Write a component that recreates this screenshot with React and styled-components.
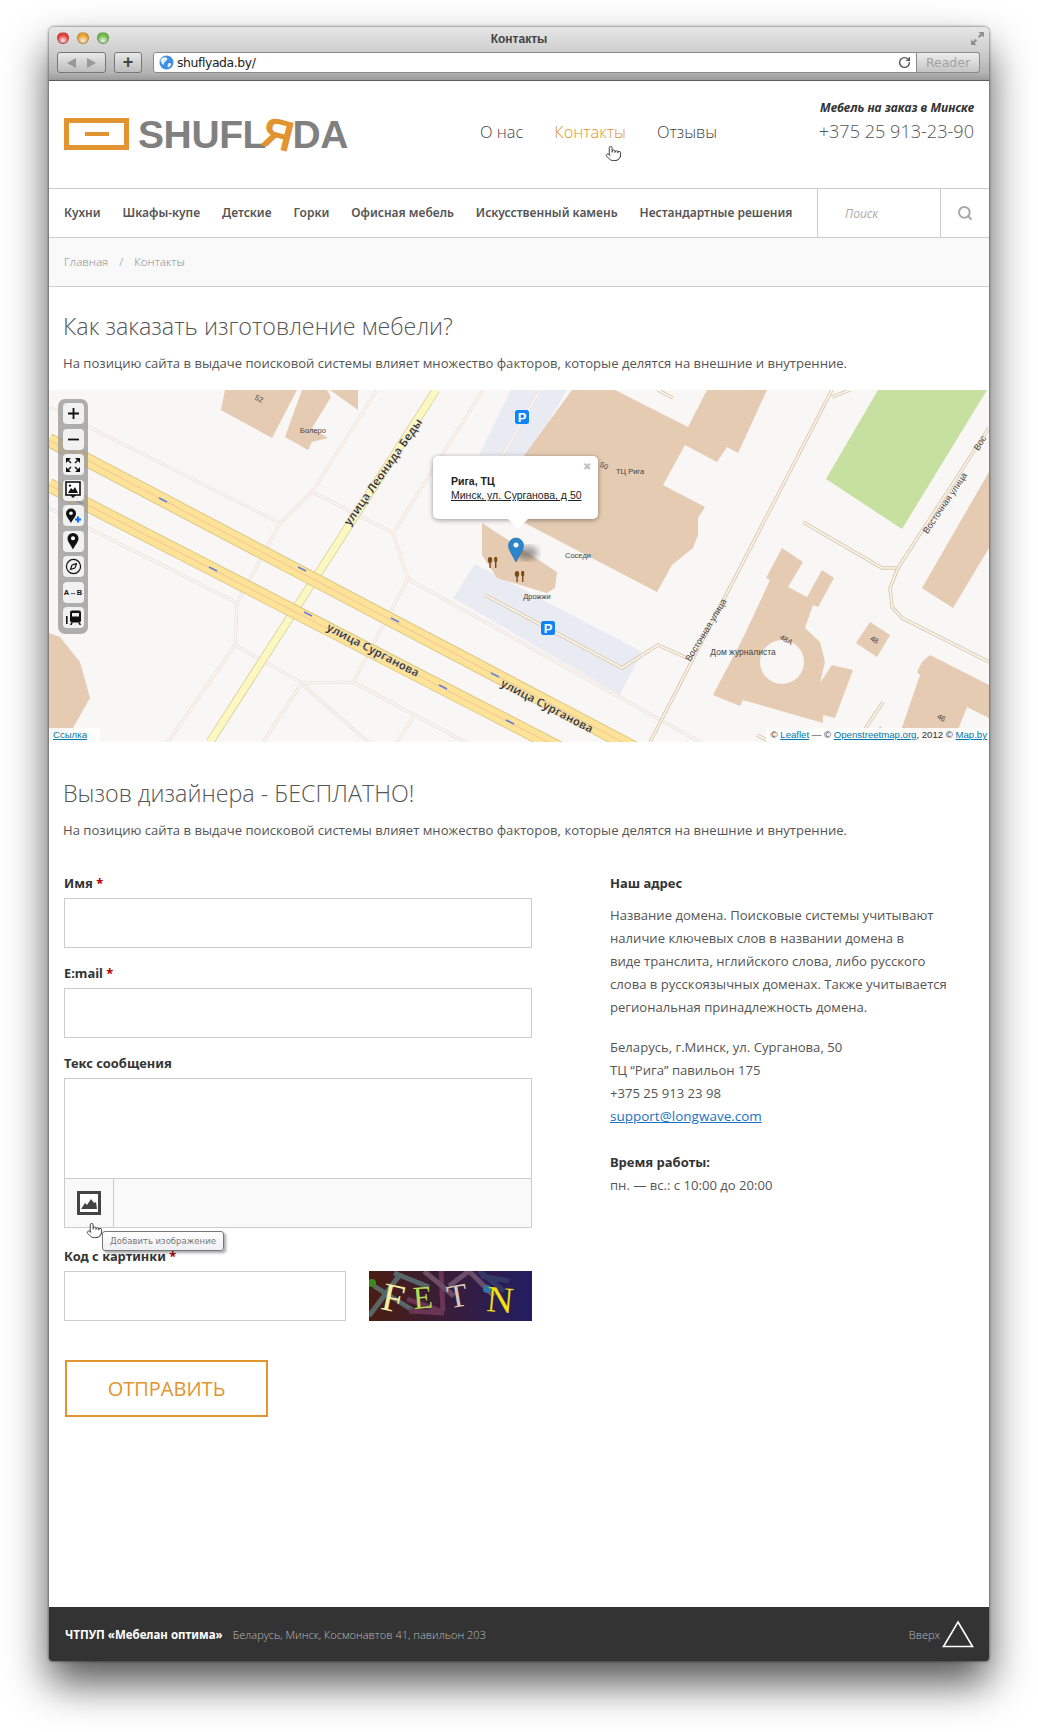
import styled, { createGlobalStyle } from 'styled-components';
import { Search, Pointer, RotateCw, Compass } from 'lucide-react';

const GlobalStyle = createGlobalStyle`
  html, body { margin: 0; padding: 0; background: #fff; }
  body { width: 1038px; height: 1732px; overflow: hidden; font-family: "Open Sans", "Noto Sans", sans-serif; }
  * { box-sizing: border-box; }
`;

const buildings = [
  '176,0 248,0 223,48 172,20',
  '253,0 278,0 282,7 263,38 279,48 263,52 259,60 236,47',
  '281,0 309,0 309,20',
  '0,243 11,247 31,272 41,308 24,338 0,352',
  '523,0 566,0 639,37 658,0 718,0 689,63 678,57 668,72 636,55 614,95 656,117 649,128 649,145 644,158 623,175 608,202 470,130 450,100',
  '433,133 508,182 506,198 498,203 481,198 448,188 433,165',
  '733,158 754,172 739,197 758,207 773,180 785,188 769,217 764,215 756,238 771,252 776,272 771,293 783,275 804,280 786,328 774,325 774,333 694,310 691,316 664,305 694,248 721,190 717,188',
  '821,232 841,245 828,267 807,253',
  '881,265 940,295 940,328 918,317 904,352 848,352 871,285 868,282 873,272',
  '940,82 873,198 904,218 940,158',
  '831,336 848,352 822,352',
];

const minorRoads = [
  '0,17 231,133 263,102 328,0',
  '263,102 344,143 434,0',
  '231,133 188,213 186,255 119,352',
  '0,118 188,213',
  '344,143 359,189 304,292 253,293 186,255',
  '359,189 651,352',
  '253,293 214,352',
  '254,295 319,352',
  '304,292 416,352',
  '364,327 348,352',
  '491,0 454,65',
];

const serviceRoads = [
  '783,0 601,352',
  '783,7 801,0',
  '940,38 849,178 833,178 754,132',
  '849,178 841,198 843,217 853,228 940,272',
  '436,205 573,278 609,255 638,268',
  '834,312 814,342',
  '609,0 624,8',
  '708,345 721,352',
];

const trafficArrows = [
  [114, 110], [253, 179], [346, 230], [446, 285],
  [164, 179], [259, 224], [394, 297], [461, 332], [30, 112],
];

const smallLabels = [
  { x: 264, y: 43, t: 'Болеро' },
  { x: 209, y: 11, t: '52', r: 25 },
  { x: 581, y: 84, t: 'ТЦ Рига' },
  { x: 554, y: 78, t: '50', r: 25 },
  { x: 529, y: 168, t: 'Соседи' },
  { x: 488, y: 209, t: 'Дрожжи' },
  { x: 694, y: 265, t: 'Дом журналиста', s: 8.5 },
  { x: 736, y: 252, t: '48А', r: 30 },
  { x: 824, y: 252, t: '48', r: 30 },
  { x: 891, y: 330, t: '46', r: 30 },
];

const MapDrawing = () => (
  <MapSvg viewBox="0 0 940 352">
    <defs>
      <filter id="pinBlur"><feGaussianBlur stdDeviation="3" /></filter>
    </defs>
    <rect width="940" height="352" fill="#f9f6f6" />
    <polygon points="462,0 518,0 480,65 430,65" fill="#e9ebf3" />
    <polygon points="426,174 593,262 571,305 404,208" fill="#e9ebf3" />
    <polygon points="829,0 938,0 853,139 777,89" fill="#c6e0a0" />
    {buildings.map((p) => <polygon key={p} points={p} fill="#e5cbb2" />)}
    <circle cx="733" cy="272" r="22" fill="#f9f6f6" />
    {minorRoads.map((p) => (
      <g key={p} fill="none">
        <polyline points={p} stroke="#ece2d6" strokeWidth="3.2" />
        <polyline points={p} stroke="#f9f6f6" strokeWidth="1.6" />
      </g>
    ))}
    {serviceRoads.map((p) => (
      <g key={p} fill="none">
        <polyline points={p} stroke="#dcc7a2" strokeWidth="3.4" />
        <polyline points={p} stroke="#f9f6f6" strokeWidth="1.6" />
      </g>
    ))}
    <line x1="387" y1="0" x2="161" y2="352" stroke="#d8c98e" strokeWidth="8.4" />
    <line x1="387" y1="0" x2="161" y2="352" stroke="#fdf8c2" strokeWidth="7" />
    <g fill="none">
      <line x1="0" y1="50" x2="640" y2="387" stroke="#d9c07c" strokeWidth="14" />
      <line x1="0" y1="50" x2="640" y2="387" stroke="#fde397" strokeWidth="12.4" />
      <line x1="0" y1="50" x2="640" y2="387" stroke="#f4b99a" strokeWidth="0.8" />
      <line x1="0" y1="95" x2="640" y2="425" stroke="#d9c07c" strokeWidth="14" />
      <line x1="0" y1="95" x2="640" y2="425" stroke="#fde397" strokeWidth="12.4" />
      <line x1="0" y1="95" x2="640" y2="425" stroke="#f4b99a" strokeWidth="0.8" />
    </g>
    {trafficArrows.map(([x, y]) => (
      <line key={x} x1={x - 4} y1={y - 2} x2={x + 4} y2={y + 2} stroke="#6a7fd8" strokeWidth="1.6" />
    ))}
    <RoadName x="324" y="264" transform="rotate(27.5 324 260)">улица Сурганова</RoadName>
    <RoadName x="498" y="320" transform="rotate(27.5 498 316)">улица Сурганова</RoadName>
    <RoadName x="334" y="86" transform="rotate(-55 334 82)">улица Леонида Беды</RoadName>
    <StreetName x="657" y="243" transform="rotate(-59 657 240)">Восточная улица</StreetName>
    <StreetName x="896" y="116" transform="rotate(-56 896 113)">Восточная улица</StreetName>
    <StreetName x="931" y="56" transform="rotate(-58 931 53)">Вос</StreetName>
    {smallLabels.map((l) => (
      <PlaceName key={l.t} x={l.x} y={l.y} fontSize={l.s || 7.5} transform={l.r ? `rotate(${l.r} ${l.x} ${l.y})` : undefined}>
        {l.t}
      </PlaceName>
    ))}
    {[[473, 27], [499, 238]].map(([x, y]) => (
      <g key={x}>
        <rect x={x - 7} y={y - 7} width="14" height="14" rx="2.5" fill="#0f84f5" />
        <ParkingLetter x={x} y={y + 4.6}>P</ParkingLetter>
      </g>
    ))}
    {[[444, 172], [471, 186]].map(([x, y]) => (
      <g key={x} fill="#7a4a17">
        <ellipse cx={x - 3} cy={y - 2} rx="2.2" ry="3" />
        <rect x={x - 3.6} y={y - 1} width="1.4" height="7" />
        <rect x={x + 1.2} y={y - 5} width="3" height="5" rx="1" />
        <rect x={x + 2} y={y - 1} width="1.4" height="7" />
      </g>
    ))}
    <ellipse cx="478" cy="163" rx="11" ry="7" fill="#333" opacity="0.45" filter="url(#pinBlur)" />
    <path d="M467 172 C463 164 459.5 160 459.5 155.5 A7.5 7.5 0 0 1 474.5 155.5 C474.5 160 471 164 467 172 Z" fill="#2b84cc" stroke="#1f6ba8" strokeWidth="0.6" />
    <circle cx="467" cy="155" r="2.5" fill="#fff" />
  </MapSvg>
);

const MapControls = () => (
  <ControlPanel>
    <ControlButton><svg width="15" height="15" viewBox="0 0 15 15"><path d="M7.5 2v11M2 7.5h11" stroke="#111" strokeWidth="1.8" /></svg></ControlButton>
    <ControlButton><svg width="15" height="15" viewBox="0 0 15 15"><path d="M2 7.5h11" stroke="#111" strokeWidth="1.8" /></svg></ControlButton>
    <ControlButton><svg width="16" height="16" viewBox="0 0 16 16" fill="#111"><path d="M1 1h5L1 6zM15 1v5l-5-5zM1 15v-5l5 5zM15 15h-5l5-5z" /><path d="M3 3l3 3M13 3l-3 3M3 13l3-3M13 13l-3-3" stroke="#111" strokeWidth="1.4" /></svg></ControlButton>
    <ControlButton><svg width="16" height="18" viewBox="0 0 16 18"><rect x="1" y="1" width="14" height="13" fill="#fff" stroke="#111" strokeWidth="1.6" /><path d="M3 12l3-5 2 2 2-3 3 6z" fill="#111" /><circle cx="5" cy="4.6" r="1.2" fill="#111" /><path d="M5 14h6l-3 3z" fill="#111" /></svg></ControlButton>
    <ControlButton><svg width="18" height="18" viewBox="0 0 18 18"><path d="M7 16C5 12 2 9.5 2 6.5a5 5 0 0 1 10 0C12 9.5 9 12 7 16z" fill="#111" /><circle cx="7" cy="6.3" r="1.8" fill="#fff" /><path d="M14 9.5v6M11 12.5h6" stroke="#0f6cf5" strokeWidth="2.2" /></svg></ControlButton>
    <ControlButton><svg width="16" height="18" viewBox="0 0 16 18"><path d="M8 17.5C6 13 2.5 10 2.5 6.5a5.5 5.5 0 0 1 11 0C13.5 10 10 13 8 17.5z" fill="#111" /><circle cx="8" cy="6.3" r="2" fill="#fff" /></svg></ControlButton>
    <ControlButton><Compass size={17} color="#111" strokeWidth={1.7} /></ControlButton>
    <ControlButton><RouteText>A↔B</RouteText></ControlButton>
    <ControlButton><svg width="17" height="15" viewBox="0 0 17 15" fill="#111"><rect x="5" y="0.5" width="11" height="12" rx="2" /><rect x="7" y="3" width="7" height="3.5" fill="#f0f0f0" /><rect x="1" y="6" width="1.6" height="8" /><path d="M6 12.5h2L6.5 15H5zM13 12.5h2l1 2.5h-1.5z" /></svg></ControlButton>
  </ControlPanel>
);

function App() {
  return (
    <>
      <GlobalStyle />
      <BrowserWindow>
        <Chrome>
          <TitleRow>
            <Lights>
              <Light $c="#e8403c" />
              <Light $c="#e8a02c" />
              <Light $c="#6cbc48" />
            </Lights>
            <WindowTitle>Контакты</WindowTitle>
            <ExpandIcon viewBox="0 0 14 14">
              <path d="M8 1h5v5l-1.8-1.8L8.8 6.6 7.4 5.2l2.4-2.4zM6 13H1V8l1.8 1.8 2.4-2.4 1.4 1.4-2.4 2.4z" fill="#8d8d8d" />
            </ExpandIcon>
          </TitleRow>
          <ToolRow>
            <BackForward>
              <Arrow $left />
              <Arrow />
            </BackForward>
            <PlusButton>+</PlusButton>
            <AddressBar>
              <svg width="15" height="15" viewBox="0 0 15 15">
                <circle cx="7.5" cy="7.5" r="7" fill="#3f8fe0" />
                <path d="M3 3c2-1 4-1 5 0s0 2-1 3-2 1-2 3-2 0-3-2 0-3 1-4zM10 8c2 0 3 1 2 2s-2 3-3 2 0-4 1-4z" fill="#e5f0fa" />
              </svg>
              <Url>shuflyada.by/</Url>
              <Reload><RotateCw size={13} strokeWidth={2.6} color="#555" /></Reload>
              <ReaderButton>Reader</ReaderButton>
            </AddressBar>
          </ToolRow>
        </Chrome>

        <Header>
          <Logo>
            <LogoBox><LogoDash /></LogoBox>
            <LogoText>SHUFL<LogoYa>Я</LogoYa>DA</LogoText>
          </Logo>
          <TopNav>
            <TopLink>О нас</TopLink>
            <TopLink $active>
              Контакты
              <HandCursor $left={51} $top={26}><Pointer size={17} strokeWidth={1.3} color="#333" fill="#fff" /></HandCursor>
            </TopLink>
            <TopLink>Отзывы</TopLink>
          </TopNav>
          <Contact>
            <Slogan>Мебель на заказ в Минске</Slogan>
            <Phone>+375 25 913-23-90</Phone>
          </Contact>
        </Header>

        <MainNav>
          <NavList>
            {['Кухни', 'Шкафы-купе', 'Детские', 'Горки', 'Офисная мебель', 'Искусственный камень', 'Нестандартные решения'].map((item) => (
              <NavItem key={item}>{item}</NavItem>
            ))}
          </NavList>
          <SearchField>Поиск</SearchField>
          <SearchButton><Search size={16} strokeWidth={3} color="#aaa" /></SearchButton>
        </MainNav>

        <Crumbs>
          <span>Главная</span>
          <CrumbSep>/</CrumbSep>
          <span>Контакты</span>
        </Crumbs>

        <Intro>
          <Title>Как заказать изготовление мебели?</Title>
          <Lead>На позицию сайта в выдаче поисковой системы влияет множество факторов, которые делятся на внешние и внутренние.</Lead>
        </Intro>

        <MapBox>
          <MapDrawing />
          <MapControls />
          <Popup>
            <PopupClose>✖</PopupClose>
            <PopupName>Рига, ТЦ</PopupName>
            <PopupAddress>Минск, ул. Сурганова, д 50</PopupAddress>
            <PopupTail />
          </Popup>
          <MapLinkBox>Ссылка</MapLinkBox>
          <Attribution>© <MapLink>Leaflet</MapLink> — © <MapLink>Openstreetmap.org</MapLink>, 2012 © <MapLink>Map.by</MapLink></Attribution>
        </MapBox>

        <Content>
          <Title>Вызов дизайнера - БЕСПЛАТНО!</Title>
          <Lead>На позицию сайта в выдаче поисковой системы влияет множество факторов, которые делятся на внешние и внутренние.</Lead>
          <Columns>
            <Form>
              <Field>
                <Label>Имя <Req>*</Req></Label>
                <Input />
              </Field>
              <Field>
                <Label>E:mail <Req>*</Req></Label>
                <Input />
              </Field>
              <Field $gap={18}>
                <Label>Текс сообщения</Label>
                <Editor>
                  <EditorArea />
                  <EditorBar>
                    <EditorButton>
                      <svg width="24" height="24" viewBox="0 0 24 24">
                        <rect width="24" height="24" fill="#444" />
                        <rect x="3" y="3" width="18" height="18" fill="#fff" />
                        <path d="M4 18l4-6 2 2 4-6 3 4 2-1 1 7z" fill="#444" />
                      </svg>
                    </EditorButton>
                    <HandCursor $left={21} $top={43}><Pointer size={17} strokeWidth={1.3} color="#333" fill="#fff" /></HandCursor>
                    <Tooltip>Добавить изображение</Tooltip>
                  </EditorBar>
                </Editor>
              </Field>
              <Field $gap={39}>
                <Label>Код с картинки <Req>*</Req></Label>
                <CaptchaRow>
                  <CaptchaInput />
                  <Captcha viewBox="0 0 163 50">
                    <defs>
                      <linearGradient id="capBg" x1="0" x2="1" y1="0" y2="0">
                        <stop offset="0" stopColor="#4a1d12" />
                        <stop offset="1" stopColor="#231d63" />
                      </linearGradient>
                    </defs>
                    <rect width="163" height="50" fill="url(#capBg)" />
                    <g fill="none" strokeWidth="5" opacity="0.75">
                      <path d="M0 45L30 5M5 15L45 40M25 2L60 16" stroke="#5f7f80" />
                      <path d="M38 28L72 40M40 40L75 42M72 0L74 40" stroke="#7a3c60" />
                      <path d="M55 0L85 25M80 15L100 0M100 0L125 25" stroke="#7d5d75" />
                      <path d="M110 0L135 20M112 5L140 10" stroke="#35406f" />
                    </g>
                    <circle cx="3" cy="12" r="4" fill="#3f8a20" />
                    <circle cx="118" cy="18" r="4" fill="#2b78a8" />
                    <CaptchaLetter x="13" y="41" fontSize="40" fill="#f6eda0" transform="rotate(12 27 28)">F</CaptchaLetter>
                    <CaptchaLetter x="44" y="37" fontSize="32" fill="#b5dc56" transform="rotate(-5 55 27)">E</CaptchaLetter>
                    <CaptchaLetter x="78" y="36" fontSize="33" fill="#d8c8b8" transform="rotate(-10 88 24)">T</CaptchaLetter>
                    <CaptchaLetter x="118" y="41" fontSize="37" fill="#f2e010" transform="rotate(5 130 26)">N</CaptchaLetter>
                  </Captcha>
                </CaptchaRow>
              </Field>
              <SubmitButton>ОТПРАВИТЬ</SubmitButton>
            </Form>
            <Aside>
              <AsideTitle>Наш адрес</AsideTitle>
              <AsideText>
                Название домена. Поисковые системы учитывают<br />
                наличие ключевых слов в названии домена в<br />
                виде транслита, нглийского слова, либо русского<br />
                слова в русскоязычных доменах. Также учитывается<br />
                региональная принадлежность домена.
              </AsideText>
              <AsideText $top={17}>
                Беларусь, г.Минск, ул. Сурганова, 50<br />
                ТЦ “Рига” павильон 175<br />
                +375 25 913 23 98<br />
                <Mail>support@longwave.com</Mail>
              </AsideText>
              <AsideTitle $top={24}>Время работы:</AsideTitle>
              <AsideText $top={2}>пн. — вс.: с 10:00 до 20:00</AsideText>
            </Aside>
          </Columns>
        </Content>

        <Footer>
          <FooterCompany>ЧТПУП «Мебелан оптима»</FooterCompany>
          <FooterAddress>Беларусь, Минск, Космонавтов 41, павильон 203</FooterAddress>
          <ToTop>
            Вверх
            <svg width="32" height="28" viewBox="0 0 32 28">
              <path d="M16 2L30.5 26.5H1.5z" fill="none" stroke="#fff" strokeWidth="1.6" />
            </svg>
          </ToTop>
        </Footer>
      </BrowserWindow>
    </>
  );
}

const BrowserWindow = styled.div`
  margin: 27px 0 0 49px;
  width: 940px;
  height: 1634px;
  display: flex;
  flex-direction: column;
  background: #fff;
  border-radius: 5px 5px 3px 3px;
  box-shadow: 0 22px 42px rgba(0, 0, 0, 0.68), 0 0 3px rgba(0, 0, 0, 0.7);
  overflow: hidden;
`;

const Chrome = styled.div`
  height: 54px;
  flex: none;
  background: linear-gradient(#e6e6e6, #cfcfcf 45%, #b4b4b4 86%, #9a9a9a 100%);
  border-bottom: 1px solid #5c5c5c;
`;

const TitleRow = styled.div`
  position: relative;
  height: 24px;
  padding-bottom: 1px;
  margin-bottom: 1px;
  display: flex;
  align-items: center;
  justify-content: center;
`;

const Lights = styled.div`
  position: absolute;
  left: 8px;
  top: 5px;
  display: flex;
  gap: 8px;
`;

const Light = styled.span`
  width: 12px;
  height: 12px;
  border-radius: 50%;
  background: radial-gradient(circle at 50% 75%, #fff8 0, ${(p) => p.$c} 60%);
  border: 1px solid #0003;
`;

const WindowTitle = styled.div`
  font: bold 12px "Liberation Sans", sans-serif;
  color: #444;
`;

const ExpandIcon = styled.svg`
  position: absolute;
  right: 4px;
  top: 4px;
  width: 15px;
  height: 15px;
`;

const ToolRow = styled.div`
  display: flex;
  align-items: center;
  padding-left: 8px;
  height: 21px;
`;

const BackForward = styled.div`
  width: 49px;
  height: 21px;
  display: flex;
  align-items: center;
  justify-content: space-around;
  padding: 0 4px;
  border: 1px solid #777;
  border-radius: 3px;
  background: linear-gradient(#e8e8e8, #bdbdbd);
`;

const Arrow = styled.span`
  width: 0;
  height: 0;
  border-top: 5px solid transparent;
  border-bottom: 5px solid transparent;
  ${(p) => (p.$left ? 'border-right: 9px solid #999;' : 'border-left: 9px solid #999;')}
`;

const PlusButton = styled.div`
  margin-left: 8px;
  width: 28px;
  height: 21px;
  display: flex;
  align-items: center;
  justify-content: center;
  font: bold 18px "Liberation Sans", sans-serif;
  color: #444;
  border: 1px solid #777;
  border-radius: 3px;
  background: linear-gradient(#e8e8e8, #bdbdbd);
`;

const AddressBar = styled.div`
  margin-left: 11px;
  width: 827px;
  height: 21px;
  display: flex;
  align-items: center;
  padding-left: 5px;
  background: #fff;
  border: 1px solid #8a8a8a;
  border-radius: 3px;
`;

const Url = styled.span`
  margin-left: 3px;
  font: 12.4px "DejaVu Sans", sans-serif;
  letter-spacing: -0.4px;
  color: #222;
`;

const Reload = styled.span`
  margin-left: auto;
  margin-right: 5px;
  display: flex;
`;

const ReaderButton = styled.div`
  width: 64px;
  height: 21px;
  margin-right: -1px;
  display: flex;
  align-items: center;
  justify-content: center;
  font: 12.5px "DejaVu Sans", sans-serif;
  color: #a2a2a2;
  border: 1px solid #8a8a8a;
  border-radius: 0 3px 3px 0;
  background: linear-gradient(#ededed, #c5c5c5);
`;

const Header = styled.header`
  position: relative;
  height: 107px;
  flex: none;
  display: flex;
  align-items: flex-start;
  padding-left: 15px;
`;

const Logo = styled.div`
  display: flex;
  align-items: center;
  margin-top: 36px;
`;

const LogoBox = styled.div`
  width: 65px;
  height: 32px;
  display: flex;
  align-items: center;
  justify-content: center;
  border: 5px solid #e29430;
`;

const LogoDash = styled.span`
  width: 24px;
  height: 4px;
  background: #e29430;
`;

const LogoText = styled.div`
  margin-left: 9px;
  font: bold 39px/32px "Liberation Sans", sans-serif;
  letter-spacing: -0.4px;
  color: #808080;
`;

const LogoYa = styled.span`
  display: inline-block;
  margin: 0 -1px 0 -3px;
  font-size: 1.1em;
  color: #e29430;
  transform: rotate(14deg) translateY(1px);
`;

const TopNav = styled.nav`
  position: absolute;
  left: 431px;
  top: 38px;
  display: flex;
  gap: 31px;
`;

const TopLink = styled.a`
  position: relative;
  font-size: 16.4px;
  font-weight: 300;
  line-height: 26px;
  color: ${(p) => (p.$active ? '#e29430' : '#444')};
`;

const HandCursor = styled.span`
  position: absolute;
  left: ${(p) => p.$left}px;
  top: ${(p) => p.$top}px;
  display: flex;
`;

const Contact = styled.div`
  margin-left: auto;
  padding: 17px 15px 0 0;
  text-align: right;
`;

const Slogan = styled.div`
  font: italic bold 12.15px/20px "Noto Sans", sans-serif;
  color: #333;
`;

const Phone = styled.div`
  font-size: 18.1px;
  font-weight: 300;
  line-height: 26px;
  color: #555;
`;

const MainNav = styled.nav`
  height: 50px;
  flex: none;
  display: flex;
  border-top: 1px solid #ccc;
  border-bottom: 1px solid #ccc;
`;

const NavList = styled.div`
  width: 768px;
  display: flex;
  align-items: center;
  gap: 22px;
  padding: 0 0 2px 15px;
`;

const NavItem = styled.a`
  font: 600 12px "Noto Sans", sans-serif;
  color: #555;
  white-space: nowrap;
`;

const SearchField = styled.div`
  width: 124px;
  display: flex;
  align-items: center;
  padding-left: 27px;
  border-left: 1px solid #ccc;
  border-right: 1px solid #ccc;
  font-size: 12px;
  font-style: italic;
  color: #aaa;
`;

const SearchButton = styled.div`
  flex: 1;
  display: flex;
  align-items: center;
  justify-content: center;
`;

const Crumbs = styled.div`
  height: 49px;
  flex: none;
  display: flex;
  align-items: center;
  padding: 0 0 2px 15px;
  font-size: 11.6px;
  font-weight: 300;
  color: #888;
  background: #f9f9f9;
  border-bottom: 1px solid #ccc;
`;

const CrumbSep = styled.span`
  margin: 0 11px;
`;

const Intro = styled.div`
  padding: 22px 14px 16px;
  flex: none;
`;

const Title = styled.h2`
  margin: 0;
  font-size: 23.3px;
  font-weight: 300;
  line-height: 34px;
  color: #555;
`;

const Lead = styled.p`
  margin: 9px 0 0;
  font-size: 13.1px;
  line-height: 22px;
  color: #555;
`;

const MapBox = styled.div`
  position: relative;
  height: 352px;
  flex: none;
  overflow: hidden;
`;

const MapSvg = styled.svg`
  display: block;
  width: 940px;
  height: 352px;
`;

const RoadName = styled.text`
  font: bold 11.5px "Open Sans", sans-serif;
  fill: #222;
  text-anchor: middle;
  stroke: #fff;
  stroke-width: 0.3px;
`;

const StreetName = styled.text`
  font: 9px "Liberation Sans", sans-serif;
  fill: #444;
  text-anchor: middle;
`;

const PlaceName = styled.text`
  font-family: "Liberation Sans", sans-serif;
  fill: #444;
  text-anchor: middle;
`;

const ParkingLetter = styled.text`
  font: bold 13px "Liberation Sans", sans-serif;
  fill: #fff;
  text-anchor: middle;
`;

const ControlPanel = styled.div`
  position: absolute;
  left: 9px;
  top: 9px;
  width: 30px;
  height: 235px;
  padding: 4px 4.5px;
  display: flex;
  flex-direction: column;
  gap: 4.5px;
  background: rgba(150, 150, 150, 0.75);
  border-radius: 7px;
`;

const ControlButton = styled.div`
  width: 21px;
  height: 21px;
  flex: none;
  display: flex;
  align-items: center;
  justify-content: center;
  background: #f2f1f1;
  border-radius: 4px;
`;

const RouteText = styled.span`
  font: bold 7.5px "Liberation Sans", sans-serif;
  color: #111;
  white-space: nowrap;
`;

const Popup = styled.div`
  position: absolute;
  left: 384px;
  top: 66px;
  width: 165px;
  height: 63px;
  padding: 18px 0 0 18px;
  background: #fff;
  border-radius: 5px;
  box-shadow: 0 1px 5px rgba(0, 0, 0, 0.4);
  font-family: "Liberation Sans", sans-serif;
  font-size: 10.5px;
  line-height: 14px;
  color: #222;
`;

const PopupClose = styled.span`
  position: absolute;
  right: 7px;
  top: 4px;
  font-size: 10px;
  color: #c4c4c4;
`;

const PopupName = styled.div`
  font-weight: bold;
`;

const PopupAddress = styled.div`
  text-decoration: underline;
  white-space: nowrap;
`;

const PopupTail = styled.span`
  position: absolute;
  left: 75px;
  bottom: -10px;
  width: 0;
  height: 0;
  border-left: 10px solid transparent;
  border-right: 10px solid transparent;
  border-top: 10px solid #fff;
`;

const MapLinkBox = styled.div`
  position: absolute;
  left: 0;
  bottom: 0;
  width: 51px;
  height: 14px;
  padding-left: 4px;
  background: rgba(255, 255, 255, 0.85);
  font: 9.6px/14px "Liberation Sans", sans-serif;
  color: #0078a8;
  text-decoration: underline;
`;

const Attribution = styled.div`
  position: absolute;
  right: 0;
  bottom: 0;
  height: 14px;
  padding: 0 2px 0 5px;
  background: rgba(255, 255, 255, 0.85);
  font: 9.6px/14px "Liberation Sans", sans-serif;
  color: #333;
  white-space: nowrap;
`;

const MapLink = styled.a`
  color: #0078a8;
  text-decoration: underline;
`;

const Content = styled.main`
  flex: 1;
  padding: 34px 14px 0;
`;

const Columns = styled.div`
  display: flex;
  margin-top: 32px;
`;

const Form = styled.form`
  width: 468px;
  margin-left: 1px;
`;

const Field = styled.div`
  margin-bottom: ${(p) => p.$gap || 15}px;
`;

const Label = styled.div`
  margin: 0 0 5px;
  font: bold 12.9px/20px "Noto Sans", sans-serif;
  color: #333;
`;

const Req = styled.span`
  color: #a00;
`;

const Input = styled.div`
  height: 50px;
  background: #fff;
  border: 1px solid #ccc;
`;

const Editor = styled.div`
  border: 1px solid #ccc;
`;

const EditorArea = styled.div`
  height: 99px;
`;

const EditorBar = styled.div`
  position: relative;
  height: 49px;
  background: #f9f9f9;
  border-top: 1px solid #ccc;
`;

const EditorButton = styled.div`
  width: 49px;
  height: 48px;
  display: flex;
  align-items: center;
  justify-content: center;
  border-right: 1px solid #ccc;
`;

const Tooltip = styled.div`
  position: absolute;
  left: 37px;
  top: 52px;
  width: 122px;
  height: 20px;
  z-index: 2;
  display: flex;
  align-items: center;
  justify-content: center;
  font: 8.5px "DejaVu Sans", sans-serif;
  color: #777;
  background: linear-gradient(#fff, #f0f0f5);
  border: 1px solid #777;
  border-radius: 3px;
  box-shadow: 2px 2px 3px rgba(0, 0, 0, 0.35);
`;

const CaptchaRow = styled.div`
  display: flex;
  justify-content: space-between;
`;

const CaptchaInput = styled(Input)`
  width: 282px;
`;

const Captcha = styled.svg`
  width: 163px;
  height: 50px;
`;

const CaptchaLetter = styled.text`
  font-family: "Liberation Serif", serif;
`;

const SubmitButton = styled.button`
  display: block;
  margin-left: 1px;
  width: 203px;
  height: 57px;
  padding: 0;
  background: #fff;
  border: 2px solid #e29430;
  font: 20px "Open Sans", sans-serif;
  color: #e29430;
`;

const Aside = styled.aside`
  margin-left: 78px;
  width: 340px;
`;

const AsideTitle = styled.div`
  margin: ${(p) => p.$top || 0}px 0 0;
  font: bold 13px/20px "Noto Sans", sans-serif;
  color: #333;
`;

const AsideText = styled.div`
  margin-top: ${(p) => p.$top || 11}px;
  font-size: 13.1px;
  line-height: 23px;
  color: #555;
  white-space: nowrap;
`;

const Mail = styled.a`
  font-size: 13.5px;
  color: #1a72c4;
  text-decoration: underline;
`;

const Footer = styled.footer`
  height: 54px;
  flex: none;
  display: flex;
  align-items: center;
  padding: 0 15px 0 16px;
  background: #333;
`;

const FooterCompany = styled.div`
  font: bold 11.5px "Noto Sans", sans-serif;
  color: #fff;
`;

const FooterAddress = styled.div`
  margin-left: 10px;
  font-size: 11.05px;
  font-weight: 300;
  color: #bbb;
`;

const ToTop = styled.div`
  margin-left: auto;
  display: flex;
  align-items: center;
  gap: 2px;
  font-size: 11px;
  font-weight: 300;
  color: #bbb;
`;

export default App;
